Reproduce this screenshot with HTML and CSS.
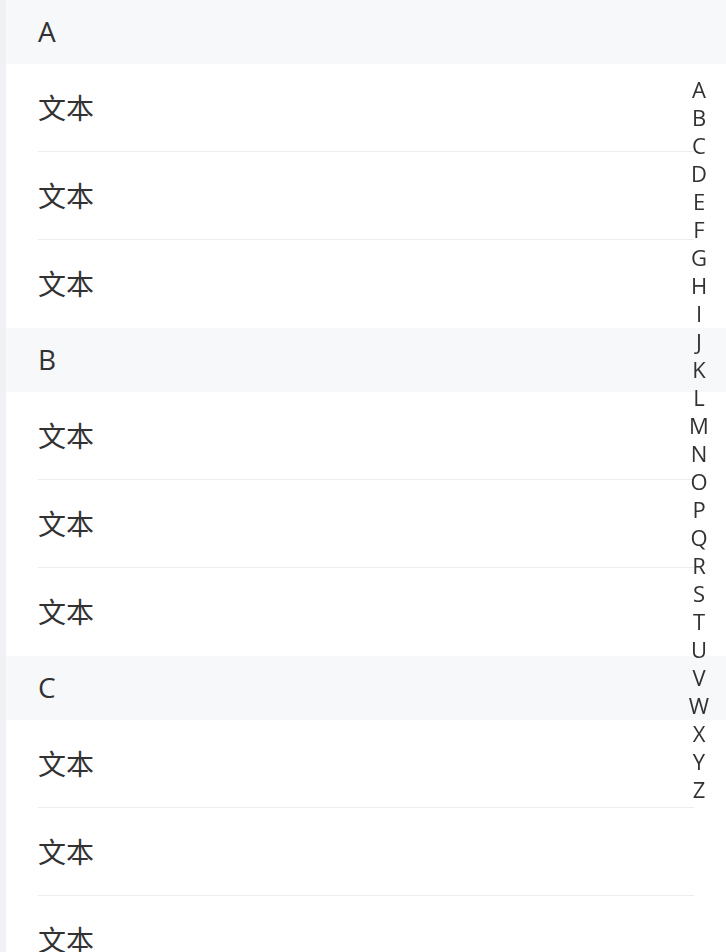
FILE: index.html
```html
<!DOCTYPE html>
<html lang="zh">
<head>
<meta charset="utf-8">
<link rel="stylesheet" href="styles.css">
</head>
<body>
<div class="page">
  <div class="group">
    <div class="anchor">A</div>
    <div class="cell">文本</div>
    <div class="cell">文本</div>
    <div class="cell">文本</div>
  </div>
  <div class="group">
    <div class="anchor">B</div>
    <div class="cell">文本</div>
    <div class="cell">文本</div>
    <div class="cell">文本</div>
  </div>
  <div class="group">
    <div class="anchor">C</div>
    <div class="cell">文本</div>
    <div class="cell">文本</div>
    <div class="cell">文本</div>
  </div>
</div>
<div class="sidebar">
  <span>A</span><span>B</span><span>C</span><span>D</span><span>E</span><span>F</span><span>G</span><span>H</span><span>I</span><span>J</span><span>K</span><span>L</span><span>M</span><span>N</span><span>O</span><span>P</span><span>Q</span><span>R</span><span>S</span><span>T</span><span>U</span><span>V</span><span>W</span><span>X</span><span>Y</span><span>Z</span>
</div>
</body>
</html>
```

FILE: styles.css
```css
html, body {
  margin: 0;
  padding: 0;
  height: 100%;
  overflow: hidden;
}
body {
  background: #f0f1f5;
  font-family: "Open Sans", "Noto Sans CJK SC", sans-serif;
  color: #323233;
}
.page {
  margin-left: 6px;
  background: #fff;
  min-height: 100%;
}
.anchor {
  height: 64px;
  line-height: 62px;
  padding-left: 32px;
  background: #f7f8fa;
  font-size: 28px;
}
.cell {
  position: relative;
  height: 88px;
  line-height: 86px;
  padding: 0 32px;
  font-size: 28px;
  font-family: "Noto Sans CJK SC", sans-serif;
}
.cell + .cell::before {
  content: "";
  position: absolute;
  left: 32px;
  right: 32px;
  top: -1px;
  height: 1px;
  background: #ebedf0;
}
.sidebar {
  position: fixed;
  right: 15px;
  top: 75px;
  display: flex;
  flex-direction: column;
  align-items: center;
  width: 24px;
}
.sidebar span {
  font-size: 22px;
  line-height: 28px;
  height: 28px;
}
```
